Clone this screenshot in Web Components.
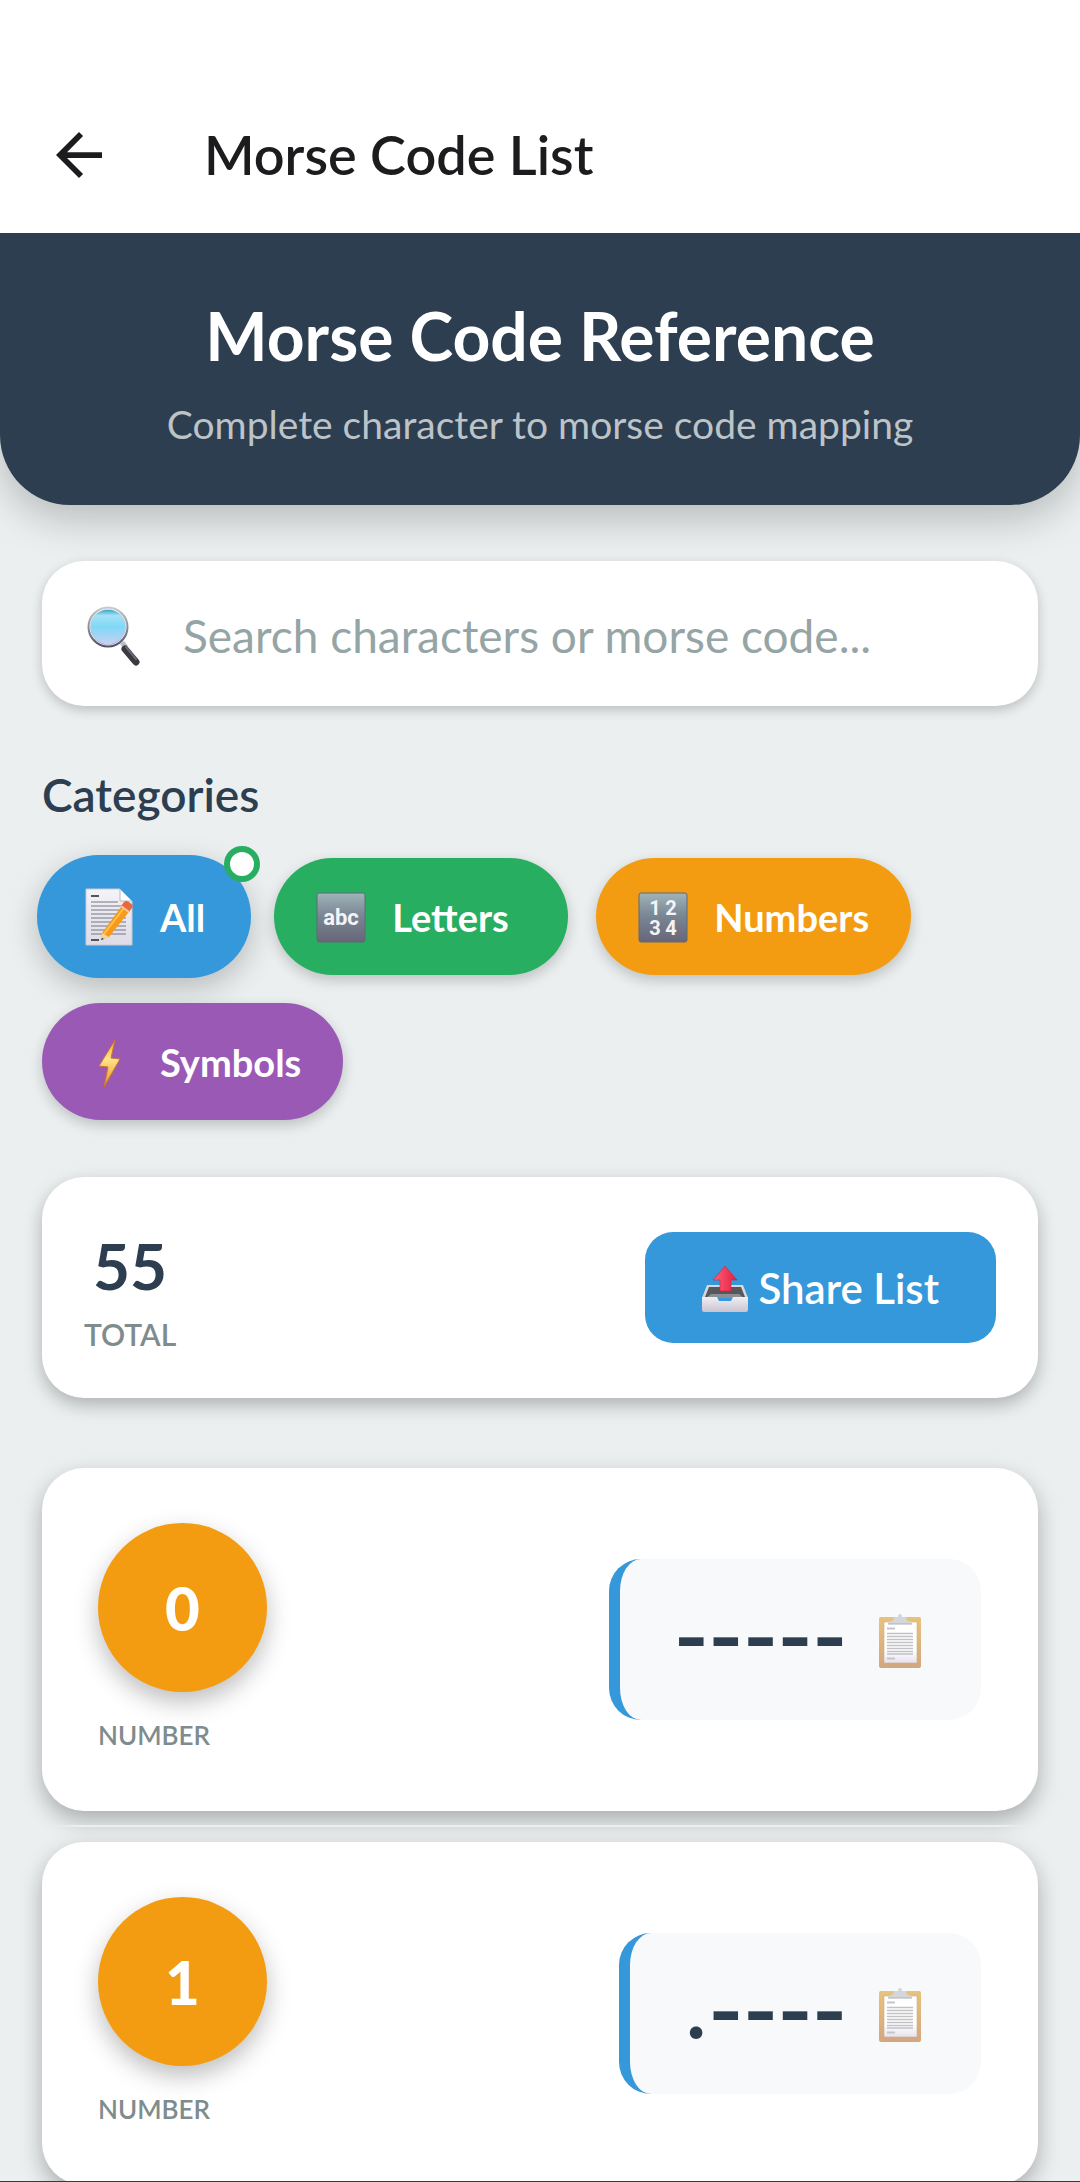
<!DOCTYPE html>
<html lang="en">
<head>
<meta charset="utf-8">
<meta name="viewport" content="width=device-width, initial-scale=1">
<title>Morse Code List</title>
<style>
  html, body { margin: 0; }
  body { font-family: Lato, "Open Sans", sans-serif; color: #2c3e50; background: #ebeff0; }
</style>
</head>
<body>
<morse-app>
  <app-bar slot="bar">Morse Code List</app-bar>
  <hero-banner>
    Morse Code Reference
    <span slot="subtitle">Complete character to morse code mapping</span>
  </hero-banner>
  <search-box placeholder="Search characters or morse code..."></search-box>
  <category-filter heading="Categories">
    <category-chip icon="memo" color="#3498db" selected>All</category-chip>
    <category-chip icon="abc" color="#27ae60" class="wide">Letters</category-chip>
    <category-chip icon="digits" color="#f39c12" class="wide">Numbers</category-chip>
    <category-chip icon="bolt" color="#9b59b6" class="wide">Symbols</category-chip>
  </category-filter>
  <stats-card total="55" label="TOTAL">Share List</stats-card>
  <morse-list>
    <morse-card char="0" kind="NUMBER" code="-----"></morse-card>
    <morse-card char="1" kind="NUMBER" code=".----"></morse-card>
  </morse-list>
</morse-app>

<script>
const ICONS = {
  back: `<svg viewBox="4 4 16 16" width="46" height="46"><path fill="#1c1c1e" d="M20 11H7.83l5.59-5.59L12 4l-8 8 8 8 1.41-1.41L7.83 13H20z"/></svg>`,
  search: `<svg viewBox="0 0 54 60" width="54" height="60">
    <defs><linearGradient id="g" x1="0" y1="0" x2="0" y2="1"><stop offset="0" stop-color="#1e93bd"/><stop offset=".2" stop-color="#a5e2f6"/><stop offset=".5" stop-color="#7fd8f6"/><stop offset="1" stop-color="#cfd0f2"/></linearGradient>
    <linearGradient id="r" x1="0" y1="0" x2="0" y2="1"><stop offset="0" stop-color="#c4cbd0"/><stop offset="1" stop-color="#55506a"/></linearGradient></defs>
    <path d="M33 38l4-3 4 5-4 3z" fill="#b9bcc4"/>
    <path d="M38 43l11 13" stroke="#3c3940" stroke-width="7" stroke-linecap="round"/><path d="M39 41l10 12" stroke="#6a6870" stroke-width="2" stroke-linecap="round"/>
    <circle cx="21" cy="21" r="19" fill="url(#g)" stroke="url(#r)" stroke-width="3"/>
    <circle cx="21" cy="21" r="18" fill="none" stroke="#eef3f6" stroke-width="1"/></svg>`,
  memo: `<svg viewBox="0 0 49 58" width="49" height="58">
    <defs><linearGradient id="p" x1="0" y1="0" x2="0" y2="1"><stop offset="0" stop-color="#f4f3f8"/><stop offset="1" stop-color="#dddbe6"/></linearGradient></defs>
    <path d="M1 1h34l12 12v44H1z" fill="url(#p)" stroke="#c9c8d4"/>
    <path d="M35 1v12h12z" fill="#fff" stroke="#b9b8c4"/>
    <path d="M6 8h8M6 52h8" stroke="#555" stroke-width="2"/>
    <path d="M6 14h27M6 18h35M6 22h35M6 26h35M6 30h35M6 34h35M6 38h35M6 42h35M6 46h35" stroke="#777681"/>
    <path d="M17 45L39 15l8 5L24 49l-8 3z" fill="#f79a1a"/><path d="M19 46L42 16" stroke="#ffc04a" stroke-width="2"/>
    <path d="M36 18l3-4q2-2 5 0t4 4l-4 6z" fill="#e7693f"/><path d="M36 18l8 6" stroke="#f9c9a4" stroke-width="2"/>
    <path d="M17 45l7 4-8 3z" fill="#f6d2a2"/><path d="M17 50l2 1-3 1z" fill="#222"/></svg>`,
  abc: `<svg viewBox="0 0 50 52" width="50" height="52">
    <defs><linearGradient id="k" x1="0" y1="0" x2="0" y2="1"><stop offset="0" stop-color="#a0b4b9"/><stop offset=".45" stop-color="#7a8795"/><stop offset="1" stop-color="#686678"/></linearGradient></defs>
    <rect x="1" y="2" width="48" height="49" rx="2" fill="url(#k)" stroke="#5f6b78"/>
    <text x="25" y="34" text-anchor="middle" font-family="Roboto,sans-serif" font-weight="700" font-size="22" fill="#f4f4f6">abc</text></svg>`,
  digits: `<svg viewBox="0 0 50 52" width="50" height="52">
    <defs><linearGradient id="k" x1="0" y1="0" x2="0" y2="1"><stop offset="0" stop-color="#a0b4b9"/><stop offset=".45" stop-color="#7a8795"/><stop offset="1" stop-color="#686678"/></linearGradient></defs>
    <rect x="1" y="2" width="48" height="49" rx="2" fill="url(#k)" stroke="#5f6b78"/>
    <g text-anchor="middle" font-family="Roboto,sans-serif" font-weight="700" font-size="20" fill="#f4f4f6"><text x="17" y="24">1</text><text x="33" y="24">2</text><text x="17" y="44">3</text><text x="33" y="44">4</text></g></svg>`,
  bolt: `<svg viewBox="0 0 50 52" width="50" height="52">
    <defs><linearGradient id="z" x1="0" y1="0" x2="0" y2="1"><stop offset="0" stop-color="#f9a825"/><stop offset=".4" stop-color="#ffe58a"/><stop offset="1" stop-color="#ee8f1c"/></linearGradient></defs>
    <path d="M31 4L15 30l9 1-4 20 16-28-9-1z" fill="url(#z)" stroke="#c9762b" stroke-linejoin="round"/></svg>`,
  outbox: `<svg viewBox="0 0 46 48" width="46" height="48">
    <defs><linearGradient id="t" x1="0" y1="0" x2="0" y2="1"><stop offset="0" stop-color="#f0eef2"/><stop offset="1" stop-color="#c9c3d2"/></linearGradient>
    <linearGradient id="a" x1="0" y1="0" x2="1" y2="0"><stop offset="0" stop-color="#ff5f78"/><stop offset="1" stop-color="#e02040"/></linearGradient></defs>
    <g transform="translate(0 2)"><path d="M5 19h36l5 13H0z" fill="#d8d8da"/><path d="M7 21h32l4 10H3z" fill="#56585c"/><path d="M9 28h28l5 4H4z" fill="#8b8e92"/>
    <path d="M0 31h15l2 4h12l2-4h15v13q0 2-2 2H2q-2 0-2-2z" fill="url(#t)"/>
    <path d="M23 0l12 14h-6v11H18V14h-7z" fill="url(#a)" stroke="#d51f42" stroke-width=".6"/></g></svg>`,
  clipboard: `<svg viewBox="0 0 42 54" width="42" height="54">
    <defs><linearGradient id="w" x1="0" y1="0" x2="0" y2="1"><stop offset="0" stop-color="#e8c37c"/><stop offset="1" stop-color="#d3a680"/></linearGradient>
    <linearGradient id="s" x1="0" y1="0" x2="0" y2="1"><stop offset=".7" stop-color="#fff"/><stop offset="1" stop-color="#e6e1ee"/></linearGradient></defs>
    <rect y="3" width="42" height="51" rx="2" fill="url(#w)"/>
    <path d="M5 8h33v41H5z" fill="url(#s)" stroke="#cfae84" stroke-width=".6"/>
    <path d="M9 10q0-3 4-3 2-1 2-4h4q0-3 2-3t2 3h4q0 3 2 4 4 0 4 3z" fill="#d3d6da"/><path d="M9 10h24" stroke="#aeb2b6"/>
    <path d="M8 14.500h8M8 44.500h8" stroke="#c4c5c8" stroke-width="2"/>
    <path d="M8 19.500h26M8 22.500h26M8 25.500h26M8 28.500h26M8 31.500h26M8 34.500h26M8 37.500h26M8 40h26" stroke="#c1c2c6" stroke-width="1.600"/></svg>`
};

const BASE = `*{box-sizing:border-box} svg{display:block;flex:none} button,input{font:inherit;color:inherit;border:0;margin:0;padding:0;background:none}`;

class Base extends HTMLElement {
  connectedCallback() {
    if (this.shadowRoot) return;
    this.attachShadow({ mode: 'open' }).innerHTML = `<style>${BASE}${this.css()}</style>${this.html()}`;
  }
  attr(name) { return this.getAttribute(name) || ''; }
}

customElements.define('morse-app', class extends Base {
  css() { return `
    :host{display:flex;flex-direction:column;height:100vh;overflow:hidden;border-bottom:1px solid #3a3a3c;box-sizing:border-box}
    main{flex:1;min-height:0;overflow:hidden}`; }
  html() { return `<slot name="bar"></slot><main><slot></slot></main>`; }
});

customElements.define('app-bar', class extends Base {
  css() { return `
    :host{display:block;flex:none;padding-top:77px;background:#fff;color:#1c1c1e}
    header{display:flex;align-items:center;gap:102px;height:156px;padding:0 56px}
    h1{margin:0;font-size:54px;line-height:72px;font-weight:600}`; }
  html() { return `<header><button type="button" aria-label="Back">${ICONS.back}</button><h1><slot></slot></h1></header>`; }
});

customElements.define('hero-banner', class extends Base {
  css() { return `
    :host{display:flex;flex-direction:column;gap:20px;padding:59px 56px 57px;text-align:center;background:#2c3e50;border-radius:0 0 70px 70px;box-shadow:0 14px 40px rgba(0,0,0,.22)}
    h2{margin:0;font-size:66px;line-height:88px;font-weight:700;color:#fff}
    p{margin:0;font-size:39px;line-height:48px;color:#bdc3c7}`; }
  html() { return `<h2><slot></slot></h2><p><slot name="subtitle"></slot></p>`; }
});

customElements.define('search-box', class extends Base {
  css() { return `
    :host{display:block;padding:56px 42px 0}
    label{display:flex;align-items:center;gap:42px;height:145px;padding:4px 45px 0;background:#fff;border-radius:42px;box-shadow:0 4px 12px rgba(0,0,0,.2)}
    input{flex:1;min-width:0;height:72px;font-size:46px;outline:0}
    input::placeholder{color:#95a5a6;opacity:1}`; }
  html() { return `<label>${ICONS.search}<input type="text" aria-label="Search" placeholder="${this.attr('placeholder')}"></label>`; }
});

customElements.define('category-filter', class extends Base {
  css() { return `
    :host{display:block;padding:60px 42px 0}
    h3{margin:0 0 34px;font-size:46px;line-height:58px;font-weight:600}
    div{display:flex;flex-wrap:wrap;gap:28px}`; }
  html() { return `<h3>${this.attr('heading')}</h3><div role="group" aria-label="Categories"><slot></slot></div>`; }
});

customElements.define('category-chip', class extends Base {
  css() { return `
    :host{display:block;position:relative}
    button{display:flex;align-items:center;gap:26px;height:117px;padding:0 42px;border-radius:59px;background:${this.attr('color')};color:#fff;font-size:38px;font-weight:700;line-height:56px;text-align:left;box-shadow:0 5px 14px rgba(0,0,0,.2)}
    :host(.wide) span{min-width:134px}
    :host([selected]){margin:-3px -5px}
    :host([selected]) button{height:123px;padding:0 46px 0 48px;border-radius:62px;box-shadow:0 10px 30px rgba(0,0,0,.22)}
    i{position:absolute;top:-9px;right:-9px;width:36px;height:36px;border:6px solid #27ae60;border-radius:50%;background:#fff}`; }
  html() {
    const on = this.hasAttribute('selected');
    return `<button type="button" aria-pressed="${on}">${ICONS[this.attr('icon')]}<span><slot></slot></span></button>${on ? '<i></i>' : ''}`;
  }
});

customElements.define('stats-card', class extends Base {
  css() { return `
    :host{display:block;padding:57px 42px 0}
    section{display:flex;align-items:center;justify-content:space-between;height:221px;padding:0 42px;background:#fff;border-radius:42px;box-shadow:0 7px 18px rgba(0,0,0,.26)}
    div{text-align:center}
    strong{display:block;font-size:64px;line-height:92px;font-weight:700}
    span{display:block;font-size:30px;line-height:44px;font-weight:600;color:#7f8c8d}
    button{display:flex;align-items:center;gap:10px;height:111px;padding:0 57px;border-radius:28px;background:#3498db;color:#fff;font-size:42px;font-weight:600}`; }
  html() { return `<section><div><strong>${this.attr('total')}</strong><span>${this.attr('label')}</span></div><button type="button">${ICONS.outbox}<slot></slot></button></section>`; }
});

customElements.define('morse-list', class extends Base {
  css() { return `
    :host{display:block;padding:70px 42px 0}
    ::slotted(:not(:last-child)){margin-bottom:31px}`; }
  html() { return `<slot></slot>`; }
});

customElements.define('morse-card', class extends Base {
  css() { return `
    :host{display:block}
    article{display:flex;align-items:center;justify-content:space-between;padding:55px 57px 56px 56px;background:#fff;border-radius:42px;box-shadow:0 9px 22px rgba(0,0,0,.28)}
    :host(:not(:last-child))::after{content:"";display:block;height:2px;margin:14px 6px -16px;position:relative;background:linear-gradient(90deg,transparent,#ebeff0 3%,#ebeff0 97%,transparent)}
    b{display:flex;align-items:center;justify-content:center;width:169px;height:169px;border-radius:50%;background:#f39c12;color:#fff;font-size:60px;font-weight:900;box-shadow:0 10px 24px rgba(0,0,0,.26)}
    small{display:block;margin-top:23px;font-size:26px;line-height:40px;font-weight:600;color:#7f8c8d}
    button{display:flex;align-items:center;gap:32px;height:161px;padding:4px 60px 0 54px;border-left:11px solid #3498db;border-radius:32px;background:#f8f9fa;color:#2c3e50}
    code{padding-bottom:8px;font:700 74px/80px Inter,sans-serif}`; }
  html() { return `<article><div><b>${this.attr('char')}</b><small>${this.attr('kind')}</small></div>
    <button type="button" aria-label="Copy ${this.attr('code')}"><code>${this.attr('code')}</code>${ICONS.clipboard}</button></article>`; }
});
</script>
</body>
</html>
